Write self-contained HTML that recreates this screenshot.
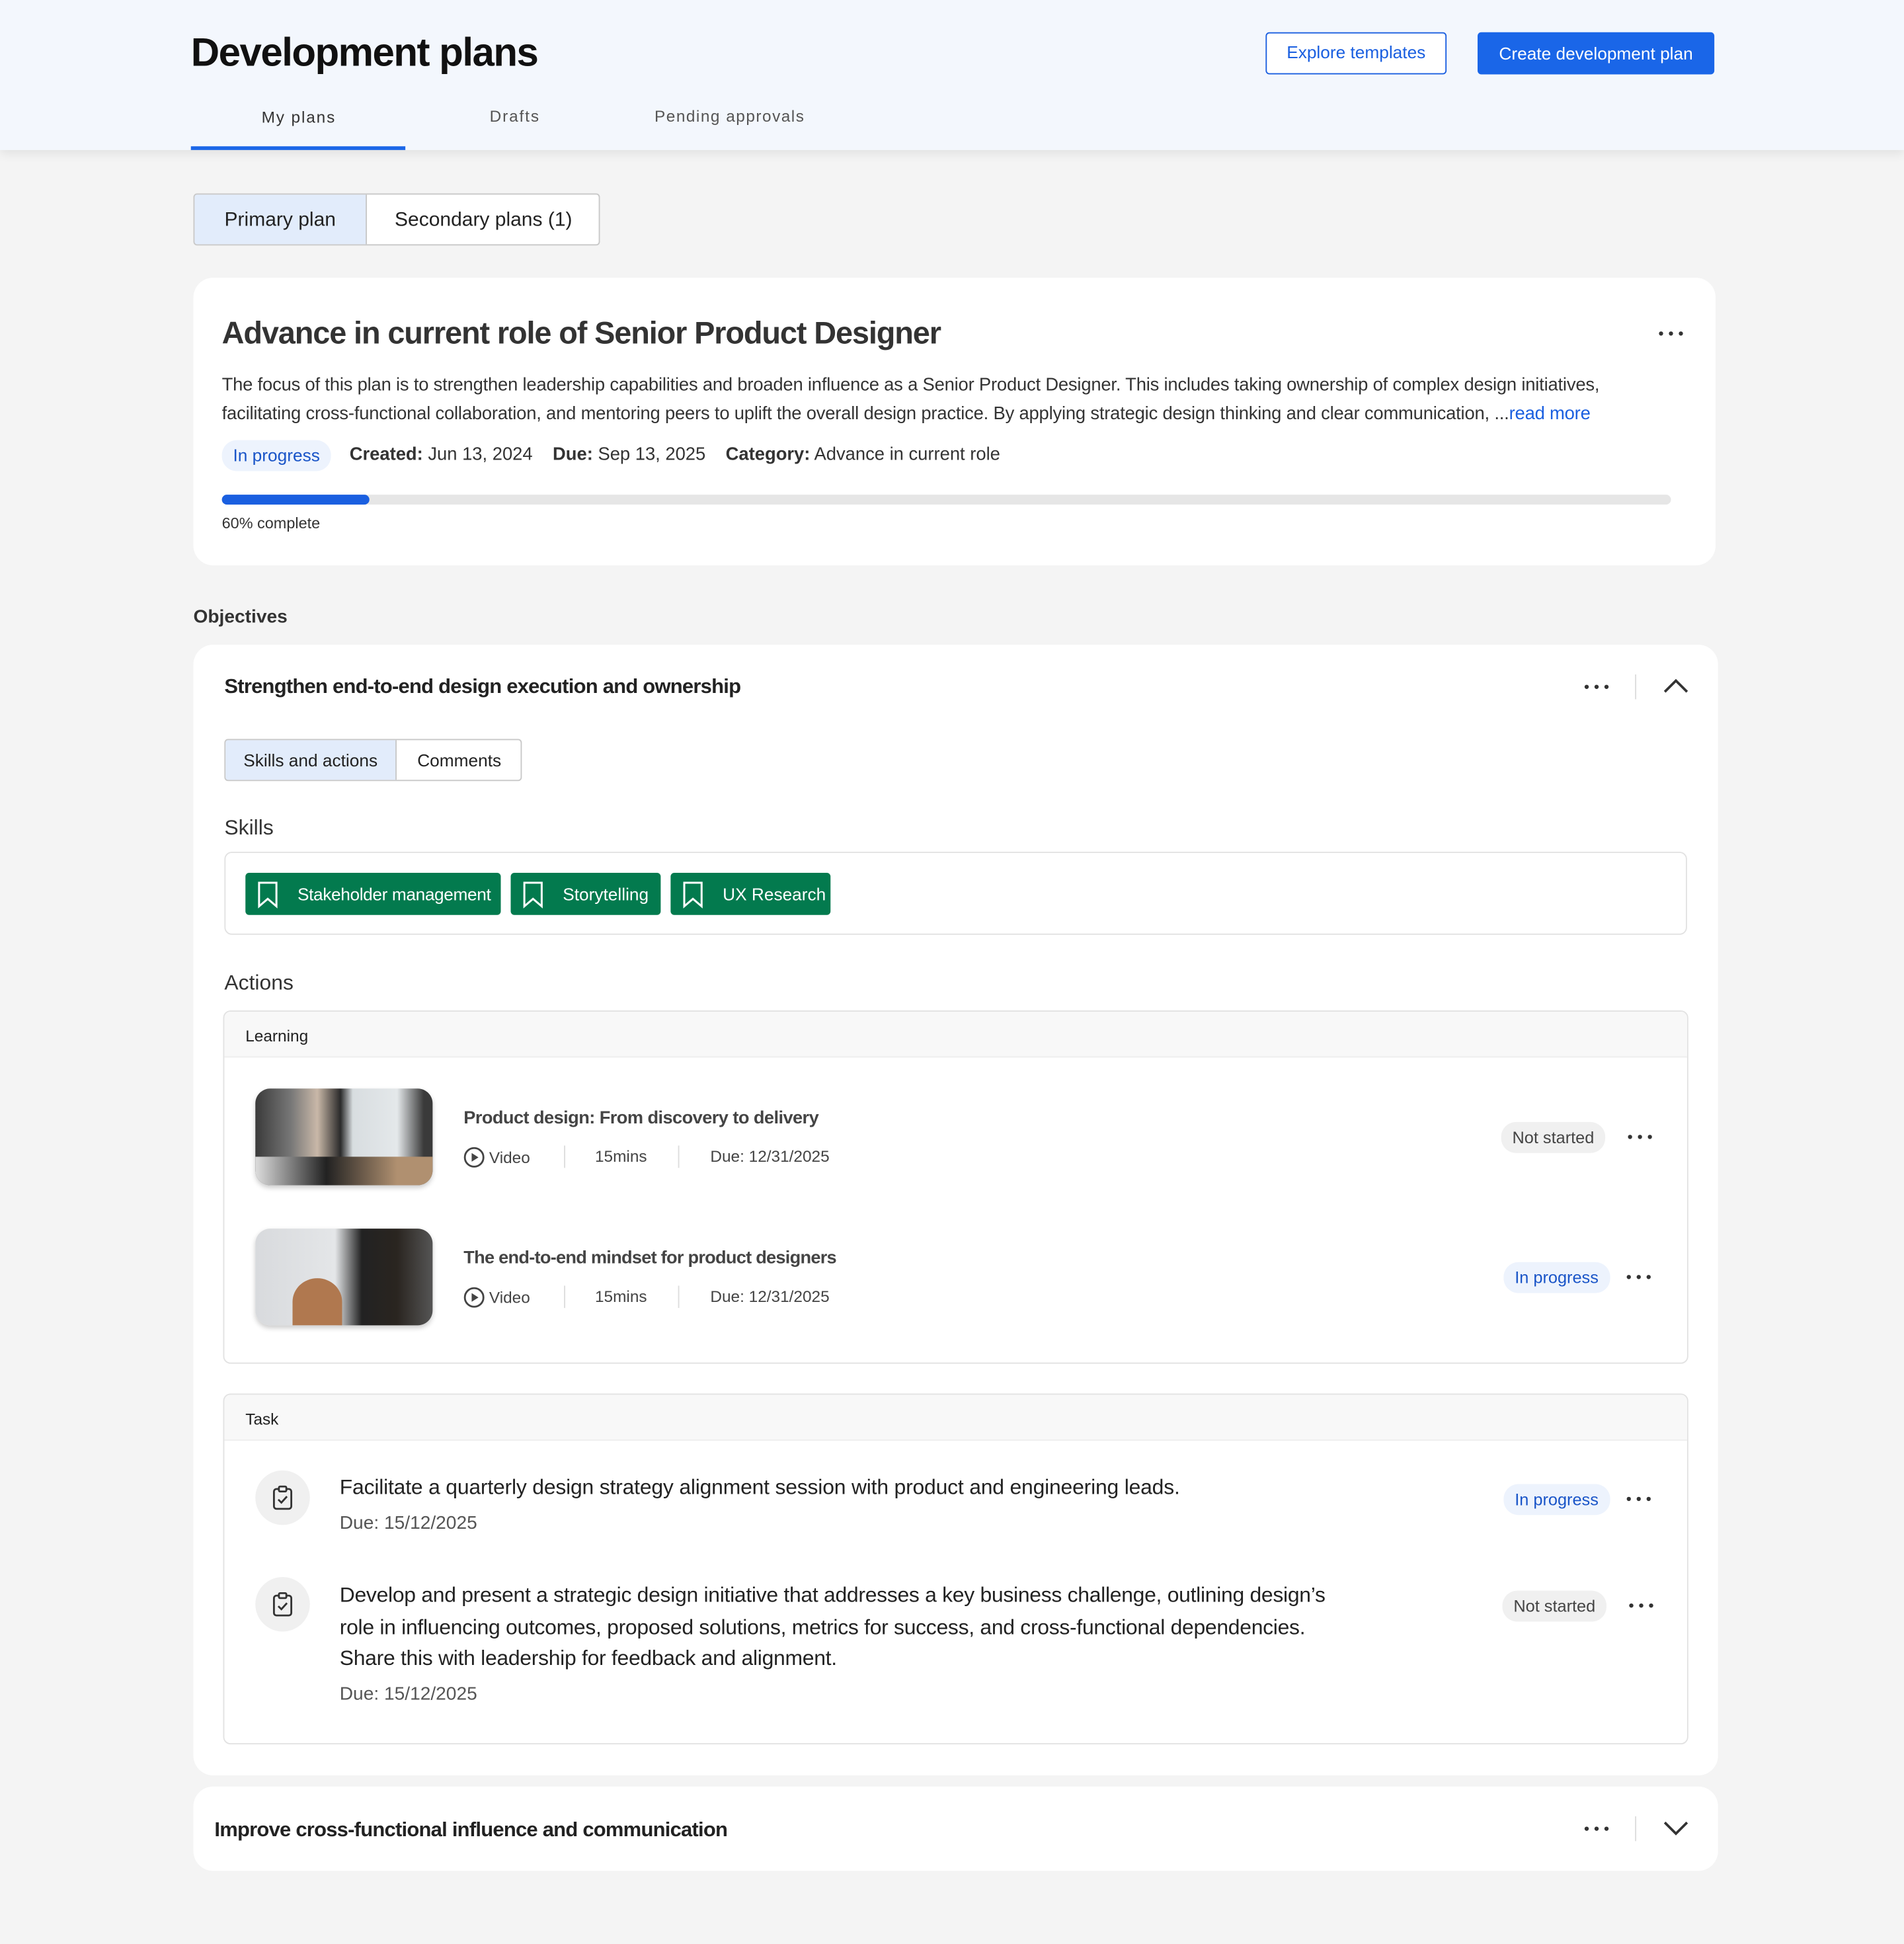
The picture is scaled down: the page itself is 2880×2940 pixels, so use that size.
<!DOCTYPE html>
<html><head><meta charset="utf-8"><style>
*{box-sizing:border-box;margin:0;padding:0}
html,body{width:2880px;height:2940px;overflow:hidden;background:#f4f4f4}
#s{position:absolute;left:0;top:0;width:1536px;height:1568px;transform:scale(1.875);transform-origin:0 0;font-family:"Liberation Sans",sans-serif;color:#222}
.a{position:absolute}
.hdr{left:0;top:0;width:1536px;height:121px;background:#f3f7fd;box-shadow:0 3px 8px rgba(0,0,0,.08)}
.card{background:#fff;border-radius:16px}
.pill{border-radius:12px;font-size:13.5px;padding:0 9px;height:25px;line-height:25px}
.chip{background:#037a4e;color:#fff;border-radius:3px;height:34px;font-size:14px;line-height:34px;padding-left:42px}
.chip svg{position:absolute;left:9px;top:7px}
.meta{font-size:13px;color:#444}
.vsep{width:1px;height:18px;background:#ddd}
</style></head><body><div id="s">
<svg width="0" height="0" style="position:absolute"><defs><g id="d"><circle cx="3" cy="3" r="1.7" fill="#333"/><circle cx="11" cy="3" r="1.7" fill="#333"/><circle cx="19" cy="3" r="1.7" fill="#333"/></g></defs></svg>
<div class="a hdr"></div>
<div class="a" style="left:154px;top:24px;font-size:32px;font-weight:bold;color:#111;letter-spacing:-0.8px">Development plans</div>
<div class="a" style="left:1021px;top:26px;width:146px;height:34px;border:1.5px solid #1a5fe0;border-radius:3px;background:#fff;color:#1a5fe0;font-size:14px;text-align:center;line-height:31px">Explore templates</div>
<div class="a" style="left:1192px;top:26px;width:191px;height:34px;border-radius:3px;background:#1a66e8;color:#fff;font-size:14px;text-align:center;line-height:34px">Create development plan</div>
<div class="a" style="left:211px;top:87px;font-size:13px;letter-spacing:1px;color:#333">My plans</div>
<div class="a" style="left:395px;top:86px;font-size:13px;letter-spacing:1px;color:#555">Drafts</div>
<div class="a" style="left:528px;top:86px;font-size:13px;letter-spacing:0.8px;color:#555">Pending approvals</div>
<div class="a" style="left:154px;top:118px;width:173px;height:3px;background:#1a66e8"></div>

<div class="a" style="left:156px;top:156px;width:328px;height:42px;border:1.5px solid #c8c8c8;border-radius:3px;background:#fff;overflow:hidden">
<div class="a" style="left:0;top:0;width:139px;height:40px;background:#e2ecfb;border-right:1.5px solid #c8c8c8;font-size:16px;line-height:42px;text-align:center;color:#222">Primary plan</div>
<div class="a" style="left:140px;top:0;width:186px;height:40px;font-size:16px;line-height:42px;text-align:center;color:#222">Secondary plans (1)</div></div>

<div class="a card" style="left:156px;top:224px;width:1228px;height:232px"></div>
<div class="a" style="left:179px;top:255px;font-size:25px;font-weight:bold;color:#333;letter-spacing:-0.6px">Advance in current role of Senior Product Designer</div>
<svg class="a" style="left:1337px;top:266px" width="22" height="6"><use href="#d"/></svg>
<div class="a" style="left:179px;top:300px;width:1140px;font-size:14.6px;line-height:22.5px;color:#333;letter-spacing:-0.1px">The focus of this plan is to strengthen leadership capabilities and broaden influence as a Senior Product Designer. This includes taking ownership of complex design initiatives, facilitating cross-functional collaboration, and mentoring peers to uplift the overall design practice. By applying strategic design thinking and clear communication, ...<span style="color:#1a5fe0">read more</span></div>
<div class="a pill" style="left:179px;top:355px;background:#edf3fd;color:#1a55c8;font-size:14px">In progress</div>
<div class="a" style="left:282px;top:359px;font-size:14.6px;color:#333"><b>Created:</b> Jun 13, 2024 &nbsp;&nbsp;&nbsp;<b>Due:</b> Sep 13, 2025 &nbsp;&nbsp;&nbsp;<b>Category:</b> Advance in current role</div>
<div class="a" style="left:179px;top:399px;width:1169px;height:8px;background:#e6e6e6;border-radius:4px"></div>
<div class="a" style="left:179px;top:399px;width:119px;height:8px;background:#1a5fe0;border-radius:4px"></div>
<div class="a" style="left:179px;top:415px;font-size:12.5px;color:#333">60% complete</div>

<div class="a" style="left:156px;top:489px;font-size:15px;font-weight:bold;color:#333">Objectives</div>

<div class="a card" style="left:156px;top:520px;width:1230px;height:912px"></div>
<div class="a" style="left:181px;top:545px;font-size:16.5px;font-weight:bold;color:#222;letter-spacing:-0.4px">Strengthen end-to-end design execution and ownership</div>
<svg class="a" style="left:1277px;top:551px" width="22" height="6"><use href="#d"/></svg>
<div class="a" style="left:1319px;top:544px;width:1px;height:20px;background:#ddd"></div>
<svg class="a" style="left:1341px;top:546px" width="22" height="14" viewBox="0 0 22 14"><path d="M2 12 L11 3 L20 12" fill="none" stroke="#333" stroke-width="2"/></svg>

<div class="a" style="left:181px;top:596px;width:240px;height:34px;border:1.5px solid #c8c8c8;border-radius:3px;background:#fff;overflow:hidden">
<div class="a" style="left:0;top:0;width:138px;height:32px;background:#e2ecfb;border-right:1.5px solid #c8c8c8;font-size:14px;line-height:32px;text-align:center">Skills and actions</div>
<div class="a" style="left:139px;top:0;width:99px;height:32px;font-size:14px;line-height:32px;text-align:center">Comments</div></div>

<div class="a" style="left:181px;top:658px;font-size:17px;color:#333">Skills</div>
<div class="a" style="left:181px;top:687px;width:1180px;height:67px;border:1.5px solid #e2e2e2;border-radius:6px"></div>
<div class="a chip" style="left:198px;top:704px;width:206px;letter-spacing:-0.2px"><svg width="18" height="22" viewBox="0 0 18 22"><path d="M2 1h14v19l-7-6-7 6z" fill="none" stroke="#fff" stroke-width="1.6"/></svg>Stakeholder management</div>
<div class="a chip" style="left:412px;top:704px;width:121px"><svg width="18" height="22" viewBox="0 0 18 22"><path d="M2 1h14v19l-7-6-7 6z" fill="none" stroke="#fff" stroke-width="1.6"/></svg>Storytelling</div>
<div class="a chip" style="left:541px;top:704px;width:129px"><svg width="18" height="22" viewBox="0 0 18 22"><path d="M2 1h14v19l-7-6-7 6z" fill="none" stroke="#fff" stroke-width="1.6"/></svg>UX Research</div>

<div class="a" style="left:181px;top:783px;font-size:17px;color:#333">Actions</div>

<div class="a" style="left:180px;top:815px;width:1182px;height:285px;border:1.5px solid #e2e2e2;border-radius:6px;overflow:hidden;background:#fff">
<div class="a" style="left:0;top:0;width:1182px;height:37px;background:#f8f8f8;border-bottom:1px solid #eee"></div>
<div class="a" style="left:17px;top:12px;font-size:13px;color:#222">Learning</div></div>
<div class="a" style="left:206px;top:878px;width:143px;height:78px;border-radius:12px;overflow:hidden;box-shadow:0 2px 4px rgba(0,0,0,.2);background:linear-gradient(90deg,#3a3a3a 0,#777 20%,#c9b8a8 35%,#2a2a2a 48%,#d8dde0 55%,#e4e8ea 80%,#3a3a3a 95%)"><div class="a" style="left:0;top:55px;width:143px;height:23px;background:linear-gradient(90deg,#ddd,#222 40%,#b09070 80%)"></div></div>
<div class="a" style="left:206px;top:991px;width:143px;height:78px;border-radius:12px;overflow:hidden;box-shadow:0 2px 4px rgba(0,0,0,.2);background:linear-gradient(90deg,#d8dadd 0,#e4e6e8 45%,#222 60%,#2a2520 80%,#555 100%)"><div class="a" style="left:30px;top:40px;width:40px;height:38px;background:#b0784f;border-radius:50% 50% 0 0"></div></div>
<div class="a" style="left:374px;top:894px;font-size:14.5px;font-weight:bold;color:#444;letter-spacing:-0.3px">Product design: From discovery to delivery</div>
<div class="a" style="left:374px;top:1007px;font-size:14.5px;font-weight:bold;color:#444;letter-spacing:-0.4px">The end-to-end mindset for product designers</div>
<div class="a meta" style="left:374px;top:925px"><svg width="17" height="17" viewBox="0 0 17 17" style="vertical-align:-4px"><circle cx="8.5" cy="8.5" r="7.5" fill="none" stroke="#444" stroke-width="1.5"/><path d="M6.5 5v7l5.5-3.5z" fill="#444"/></svg> Video</div>
<div class="a vsep" style="left:455px;top:924px"></div><div class="a meta" style="left:480px;top:925px">15mins</div>
<div class="a vsep" style="left:547px;top:924px"></div><div class="a meta" style="left:573px;top:925px">Due: 12/31/2025</div>
<div class="a meta" style="left:374px;top:1038px"><svg width="17" height="17" viewBox="0 0 17 17" style="vertical-align:-4px"><circle cx="8.5" cy="8.5" r="7.5" fill="none" stroke="#444" stroke-width="1.5"/><path d="M6.5 5v7l5.5-3.5z" fill="#444"/></svg> Video</div>
<div class="a vsep" style="left:455px;top:1037px"></div><div class="a meta" style="left:480px;top:1038px">15mins</div>
<div class="a vsep" style="left:547px;top:1037px"></div><div class="a meta" style="left:573px;top:1038px">Due: 12/31/2025</div>
<div class="a pill" style="left:1211px;top:905px;background:#f0f0f0;color:#444">Not started</div>
<svg class="a" style="left:1312px;top:914px" width="22" height="6"><use href="#d"/></svg>
<div class="a pill" style="left:1213px;top:1018px;background:#edf3fd;color:#1a55c8">In progress</div>
<svg class="a" style="left:1311px;top:1027px" width="22" height="6"><use href="#d"/></svg>

<div class="a" style="left:180px;top:1124px;width:1182px;height:283px;border:1.5px solid #e2e2e2;border-radius:6px;overflow:hidden;background:#fff">
<div class="a" style="left:0;top:0;width:1182px;height:37px;background:#f8f8f8;border-bottom:1px solid #eee"></div>
<div class="a" style="left:17px;top:12px;font-size:13px;color:#222">Task</div></div>
<div class="a" style="left:206px;top:1186px;width:44px;height:44px;border-radius:50%;background:#f0f0f0"></div>
<div class="a" style="left:206px;top:1272px;width:44px;height:44px;border-radius:50%;background:#f0f0f0"></div>
<svg class="a" style="left:219px;top:1198px" width="18" height="20" viewBox="0 0 18 20"><rect x="2" y="3" width="14" height="16" rx="2" fill="none" stroke="#333" stroke-width="1.5"/><rect x="6" y="1" width="6" height="4" rx="1" fill="#f0f0f0" stroke="#333" stroke-width="1.5"/><path d="M5.5 11.5l2.5 2.5 4.5-5" fill="none" stroke="#333" stroke-width="1.5"/></svg>
<svg class="a" style="left:219px;top:1284px" width="18" height="20" viewBox="0 0 18 20"><rect x="2" y="3" width="14" height="16" rx="2" fill="none" stroke="#333" stroke-width="1.5"/><rect x="6" y="1" width="6" height="4" rx="1" fill="#f0f0f0" stroke="#333" stroke-width="1.5"/><path d="M5.5 11.5l2.5 2.5 4.5-5" fill="none" stroke="#333" stroke-width="1.5"/></svg>
<div class="a" style="left:274px;top:1190px;font-size:17px;color:#222;letter-spacing:-0.1px">Facilitate a quarterly design strategy alignment session with product and engineering leads.</div>
<div class="a" style="left:274px;top:1220px;font-size:15px;color:#555">Due: 15/12/2025</div>
<div class="a" style="left:274px;top:1274px;width:810px;font-size:17px;line-height:25.5px;color:#222;letter-spacing:-0.15px">Develop and present a strategic design initiative that addresses a key business challenge, outlining design’s role in influencing outcomes, proposed solutions, metrics for success, and cross-functional dependencies. Share this with leadership for feedback and alignment.</div>
<div class="a" style="left:274px;top:1358px;font-size:15px;color:#555">Due: 15/12/2025</div>
<div class="a pill" style="left:1213px;top:1197px;background:#edf3fd;color:#1a55c8">In progress</div>
<svg class="a" style="left:1311px;top:1206px" width="22" height="6"><use href="#d"/></svg>
<div class="a pill" style="left:1212px;top:1283px;background:#f0f0f0;color:#444">Not started</div>
<svg class="a" style="left:1313px;top:1292px" width="22" height="6"><use href="#d"/></svg>

<div class="a card" style="left:156px;top:1441px;width:1230px;height:68px"></div>
<div class="a" style="left:173px;top:1467px;font-size:16.5px;font-weight:bold;color:#222;letter-spacing:-0.4px">Improve cross-functional influence and communication</div>
<svg class="a" style="left:1277px;top:1472px" width="22" height="6"><use href="#d"/></svg>
<div class="a" style="left:1319px;top:1465px;width:1px;height:20px;background:#ddd"></div>
<svg class="a" style="left:1341px;top:1468px" width="22" height="14" viewBox="0 0 22 14"><path d="M2 2 L11 11 L20 2" fill="none" stroke="#333" stroke-width="2"/></svg>
</div></body></html>
